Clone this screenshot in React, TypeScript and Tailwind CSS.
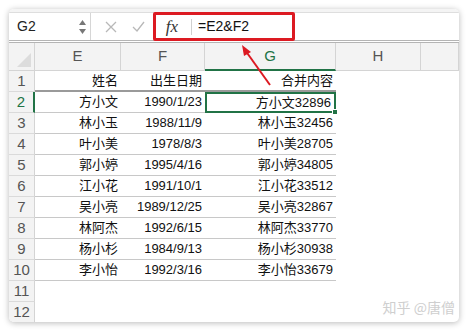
import { Fragment } from 'react';

const rows: [string, string, string][] = [
  ['姓名', '出生日期', '合并内容'],
  ['方小文', '1990/1/23', '方小文32896'],
  ['林小玉', '1988/11/9', '林小玉32456'],
  ['叶小美', '1978/8/3', '叶小美28705'],
  ['郭小婷', '1995/4/16', '郭小婷34805'],
  ['江小花', '1991/10/1', '江小花33512'],
  ['吴小亮', '1989/12/25', '吴小亮32867'],
  ['林阿杰', '1992/6/15', '林阿杰33770'],
  ['杨小杉', '1984/9/13', '杨小杉30938'],
  ['李小怡', '1992/3/16', '李小怡33679'],
];

const font = "font-['Liberation_Sans','Noto_Sans_CJK_SC',sans-serif]";

const App = () => {
  return (
    <div className={`w-[468px] h-[331px] bg-white pt-[9px] pl-[9px] ${font}`}>
      <div className="relative w-[450px] h-[313px] bg-white rounded-[5px] overflow-hidden shadow-[0_1px_6px_rgba(0,0,0,0.28)]">
        {/* top strip */}
        <div className="h-[4px] bg-[#f4f4f4] border-b border-[#dedede]" />

        {/* formula bar */}
        <div className="h-[27px] flex items-center">
          <div className="w-[82px] h-full flex items-center justify-between pl-[8px] pr-[4px] border-r border-[#d6d6d6]">
            <span className="text-[14px] text-[#222]">G2</span>
            <div className="flex flex-col items-center gap-[4px] text-[#777]">
              <svg width="7" height="5" viewBox="0 0 7 5"><path d="M3.5 0L7 5H0z" fill="currentColor" /></svg>
              <svg width="7" height="5" viewBox="0 0 7 5"><path d="M0 0h7L3.5 5z" fill="currentColor" /></svg>
            </div>
          </div>
          <div className="w-[62px] flex items-center justify-around pl-[6px] text-[#b8b8b8]">
            <svg width="12" height="12" viewBox="0 0 12 12"><path d="M1 1l10 10M11 1L1 11" stroke="currentColor" strokeWidth="1.3" /></svg>
            <svg width="13" height="11" viewBox="0 0 13 11"><path d="M1 6l4 4 7-9" stroke="currentColor" strokeWidth="1.3" fill="none" /></svg>
          </div>
          <div className="flex items-center h-full">
            <span className="w-[38px] text-center text-[17px] italic text-[#333] font-['Liberation_Serif',serif]">fx</span>
            <div className="w-px h-[16px] bg-[#d0d0d0]" />
            <span className="pl-[6px] text-[14px] text-[#111]">=E2&amp;F2</span>
          </div>
        </div>

        {/* double line */}
        <div className="h-[3px] border-y border-[#b4b4b4]" />

        {/* grid */}
        <div className="grid grid-cols-[26px_86px_84px_131px_85px_38px] grid-rows-[28px_repeat(12,21px)]">
          {/* header row */}
          <div className="relative bg-[#f3f3f3] border-r border-b border-[#d4d4d4]">
            <svg className="absolute right-[3px] bottom-[3px]" width="14" height="14" viewBox="0 0 14 14"><path d="M14 0V14H0z" fill="#dcdcdc" /></svg>
          </div>
          {['E', 'F', 'G', 'H', ''].map((c) => (
            <div
              key={c || 'blank'}
              className={`flex items-center justify-center text-[15px] bg-[#f3f3f3] border-r border-[#d4d4d4] ${
                c === 'G' ? 'text-[#217346] border-b-2 border-b-[#217346] bg-[#eaeaea]' : 'text-[#555] border-b border-b-[#d4d4d4]'
              }`}
            >
              {c}
            </div>
          ))}

          {Array.from({ length: 12 }).map((_, i) => {
            const r = rows[i];
            const lineCls = i === 0 ? 'border-b-2 border-[#9a9a9a]' : r ? 'border-b border-[#c8c8c8]' : '';
            return (
              <Fragment key={i}>
                <div
                  className={`flex items-center justify-center text-[15px] bg-[#f3f3f3] border-b border-[#dadada] ${
                    i === 1 ? 'text-[#217346] border-r-2 border-r-[#217346]' : 'text-[#555] border-r border-r-[#d4d4d4]'
                  }`}
                >
                  {i + 1}
                </div>
                <div className={`flex items-center justify-end pr-[3px] text-[13px] text-[#111] ${lineCls}`}>{r?.[0]}</div>
                <div className={`flex items-center justify-end pr-[3px] text-[13px] text-[#111] ${lineCls}`}>{r?.[1]}</div>
                <div
                  className={`relative flex items-center justify-end pr-[3px] text-[13px] text-[#111] ${
                    i === 1 ? 'border-2 border-[#217346]' : lineCls
                  }`}
                >
                  {r?.[2]}
                  {i === 1 && <div className="absolute right-[-4px] bottom-[-4px] w-[6px] h-[6px] bg-[#217346] border border-white" />}
                </div>
                <div />
                <div />
              </Fragment>
            );
          })}
        </div>

        {/* annotation box */}
        <div className="absolute left-[144px] top-[3px] w-[142px] h-[29px] border-[3px] border-[#dc1a22] rounded-[2px]" />

        {/* annotation arrow */}
        <svg className="absolute left-0 top-0 pointer-events-none" width="450" height="313">
          <line x1="261" y1="76" x2="236" y2="41" stroke="#dc1a22" strokeWidth="2" />
          <path d="M233 36L242 43L235 47z" fill="#dc1a22" />
        </svg>

        {/* watermark */}
        <div className="absolute right-[4px] bottom-[4px] text-[14px] text-[#cfcfcf] font-['Noto_Sans_CJK_SC',sans-serif]">
          知乎 @唐僧
        </div>
      </div>
    </div>
  );
};

export default App;
